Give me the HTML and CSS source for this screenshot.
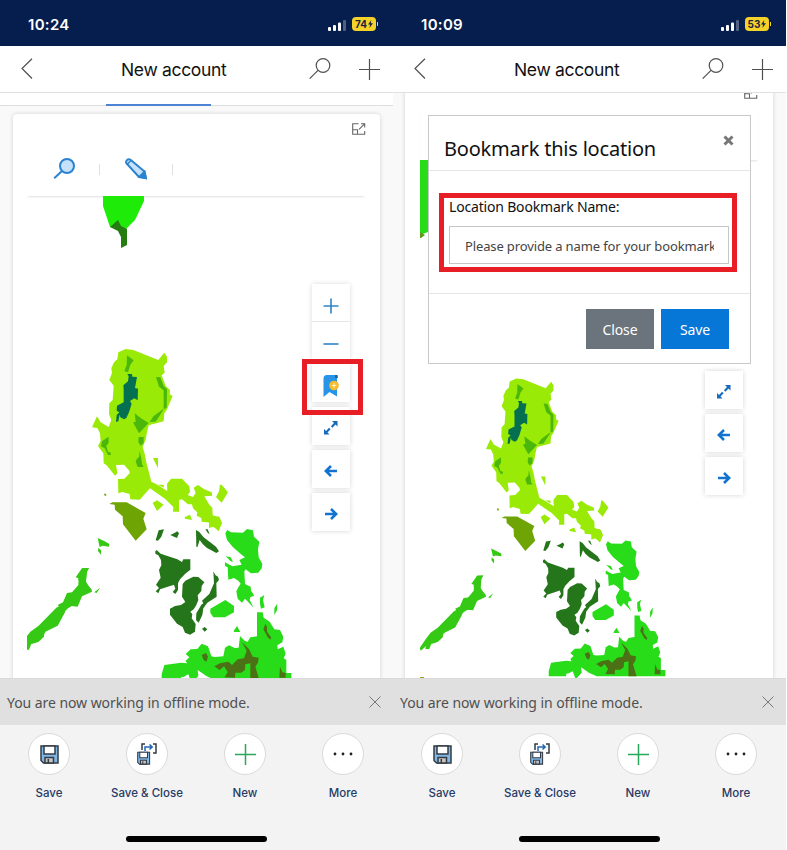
FILE: index.html
```html
<!DOCTYPE html>
<html lang="en">
<head>
<meta charset="utf-8">
<title>New account</title>
<link rel="stylesheet" href="styles.css">
</head>
<body>
<svg class="defs" width="0" height="0" aria-hidden="true">
  <defs>
    <g id="signal"><rect x="0" y="7" width="3" height="4" rx="1"/><rect x="5" y="5" width="3" height="6" rx="1"/><rect x="10" y="2.500" width="3" height="8.500" rx="1"/><rect x="15" y="0" width="3" height="11" rx="1" opacity=".3"/></g>
    <g id="bolt"><path d="M3.300 0 0 4.600h2.100L1.400 8 5 3.200H2.800z"/></g>
    <g id="back"><path d="M11 .7 1 10.500l10 10"/></g>
    <g id="search"><circle cx="14" cy="7.500" r="6.800"/><path d="M9 12.300.7 20.700"/></g>
    <g id="plus"><path d="M10.500 0v21M0 10.500h21"/></g>
    <g id="popout"><path d="M6.500.7H.7v10.600h12V8M.7 6.700h4.800v4.600M9 .7h3.700v3.800M12.500.9 7 6.300"/></g>
    <g id="lens"><circle cx="14" cy="8" r="7" fill="#c5e2fa"/><path d="M9 13 1.200 20.200"/></g>
    <g id="pencil"><path d="M1.500 5.500C.2 3 2.800.3 5.300 1.600L19.500 13.500l1.300 6.500-6.800-1z" fill="#c5e2fa"/><path d="m14.500 18.800 5-5 1.500 6.500z" fill="#2b83cf"/><path d="M2.500 6 6 2.500" stroke-width="1.400"/></g>
    <g id="expand"><path d="M8 0h5.500v5.500L11.500 3.600 8.400 6.700 6.900 5.200 10 2.100zM0 13.500V8l2 1.900 3.100-3.100 1.500 1.500-3.100 3.100 2 2.100z"/></g>
    <g id="arrow"><path d="M13 6H2.500M7 1 1.800 6 7 11"/></g>
    <g id="floppy"><path d="M1 1h17v17H3.500L1 15.500z" fill="#82b7e5"/><path d="M4 1h11v8H4z" fill="#fff"/><path d="M5 18v-5.500h8.500V18z" fill="#c9c3c0"/><path d="M8.300 14v4"/></g>
    <g id="islands">
      <g transform="translate(20 340) scale(.33333)">
        <path fill="#99ea06" d="M295 37 317 27 340 30 415 60 433 38 441 50 441 67 431 78 434 98 425 106 437 138 450 150 449 163 458 168 440 210 433 220 431 244 386 256 381 276 377 299 368 321 374 341 380 371 386 394 394 425 408 432 442 453 441 432 453 416 486 416 508 439 510 456 503 465 519 471 527 459 521 443 534 435 553 448 575 457 577 467 553 469 568 494 577 503 578 526 599 532 605 548 596 573 580 560 576 548 545 545 544 534 530 527 532 517 519 505 516 493 504 493 486 478 477 480 477 515 459 515 460 501 435 476 390 445 359 479 331 478 329 462 307 456 295 460 294 417 313 416 329 400 328 392 312 374 288 375 292 400 285 407 260 376 251 370 250 340 234 318 242 304 240 280 232 264 216 262 231 229 242 247 266 261 274 240 267 222 268 190 278 180 281 137 268 120 276 99 274 85 281 69 285 64 292 58z"/>
        <path fill="#99ea06" d="M399 354h15v31zM413 434h18v9l-10-5zM398 489l13-8 20 13-20 19zM600 434l5 0 19 23-19 31-17-17 9-17zM495 531l15-7 6 16-22-4zM567 540l28-11 11 21-11 24-10-15-18 5z"/>
        <g fill="#4bb70a"><path d="M321 46 341 61 331 74 324 97 313 94 320 75zM408 111 421 112 431 138 441 148 440 204 431 207 431 151 417 140zM344 220 363 235 386 249 357 280 339 247 347 246zM426 210 431 208 413 236 407 245 389 246 400 229zM356 291h15l0 18-9 8-7-10zM246 304l20-14 0 18-7 10 5 18 7 1 2 8h-9l-10-20-11-6zM359 333l5 22 2 18 5 8h-18l-6-17 5-9 5-3z"/></g>
        <path fill="#05704f" d="M322 102h14l1 8 14 1-6 33 9 2-1 35-10-6-13 8 5 8-8 26-8 17-7 4-11-6-2-8-4 20-7 2 2-21 8-8-8-5 1-15 20-10 0-39-1-12 14-12 2-15z"/>
        <path fill="#6ea403" d="m268 492 9-5h43l57 32-7 17 10 32-33 34-38-49-1-24-23-20-1-15zM252 461h6l1 6-5 0z"/>
      </g>
      <g transform="translate(20 490) scale(.33333)">
        <path fill="#35c915" d="m186 235 21-1-7 11-3 30 5 10 13 14 1 6-30 14-13 31-18-2-13 8-6 7-9 13-14 29-34 14-9 18-24 22-23 4-24 22-5-8 19-28 18-24 24-17 54-55 8-4-4-4 16-8 12-28 15-2 8-9 11-13 1-20-9-3z"/>
        <path fill="#35c915" d="M207 234 201 245 198 275 204 285 215 300 185 314 172 347 150 349 138 349 134 355 135 367 113 407 73 427 72 440 55 456 34 461 27 479 14 479 20 450 60 412 73 414 84 396 122 360 118 350 137 345 137 332 160 306 166 311 184 302 186 274 174 270 186 235zM233 144l21 10 13 7v9l-19-3-9 4zM235 173l8 8v13l-9-11zM223 307l17-14-10 16z"/>
        <path fill="#25751a" d="m416 121 16-3-8 22-10 12-7-1zM451 135l11-5 10-6 5 6-6 14-9-4zM528 120l10 6 12 15 38 29 9 14-8 5-29-16-12-11-9-12-7 22-3-2zM556 118l7 0 6 15-6-5z"/>
      </g>
      <g transform="translate(150 520) scale(.33333)" fill="#25751a">
        <path d="M16 94 20 90 32 101 82 118 96 126 100 118 121 118 121 149 105 162 90 178 84 190 84 210 76 222 68 216 76 206 72 194 30 208 25 220 17 214 27 204 18 194 32 173 27 150 34 136 33 120 25 106 16 101zM98 192 106 182 130 170 145 171 163 187 155 198 154 213 143 226 145 240 139 255 131 268 121 275 127 283 125 295 137 312 135 335 120 344 105 338 98 321 81 311 60 284 60 266 75 258 93 255 106 246 96 230zM190 154 196 165 204 170 207 180 199 189 200 230 172 248 160 265 157 285 146 308 138 300 139 280 154 254 160 250 156 242 178 222 192 190z"/><path d="m156 326 8-5 8 7-8 7z"/>
      </g>
      <g transform="translate(215 520) scale(.33333)">
        <path fill="#28dc1a" d="M31 40 37 30 48 37 84 38 96 27 114 31 117 50 133 65 129 88 131 112 142 132 140 145 130 158 108 160 92 148 88 154 90 192 107 200 108 212 115 222 117 228 106 231 104 240 116 263 94 240 90 236 81 248 68 236 64 214 70 202 77 191 70 182 57 174 40 179 38 142 30 138 30 127 52 139 80 134 73 120 90 112 80 104 54 82 36 60zM32 109l15 3 7 13-7-1zM135 233l13-8-4 15 5 22-11 4-3-15zM178 264l9-13-1 20-8 14zM-14 266l45-26 26 18v19l-27 15h-35l-9-13zM56 333l10-15 10 18h-19z"/>
        <path fill="#28dc1a" d="M126 277h17l3 16 18 12 14 23 17 2 10 20-3 17-15 9 1 12 17-8 7 21-6 14 8 4v40h15v21H0l-26-12-26-18 2 18-20 22-10-27-15 8h-6l-1 9h-58l0-17 8-28 50-7 18 2-4-8 11-10-11-10 15-14 20-1 13-16 19 8 10 30 11 2 25-2 5-26 12-7 17 8 12-1 4-35 14 14 9 3 8-13 20-3z"/>
      </g>
      <g transform="translate(20 490) scale(.33333)">
        <path fill="#4c7015" d="m545 495 13-6 6 11-5 15-8-5zM583 529l17-9 25-5 11 10 17-17 19-3 8-23-14-25 21 20 11 23 18 3-2 15-8 12 12 40h-27l0-50-15 3-1 17-12 8-17 0-1 15-31-1 9-16-11-17-13 11zM736 402l5 8 0 15 12 17-1 7-9-7-5-10-8-14zM780 530l7 17 10 2v14h-19z"/>
      </g>
    </g>
  </defs>
</svg>

<div class="screens">
  <section class="phone">
    <div class="status"><span class="time">10:24</span><svg class="signal" width="18" height="11"><use href="#signal"/></svg><span class="battery">74<svg width="5" height="8"><use href="#bolt"/></svg></span></div>
    <header class="bar"><svg class="i-back" width="12" height="22"><use href="#back"/></svg><h1>New account</h1><svg class="i-search" width="22" height="22"><use href="#search"/></svg><svg class="i-plus" width="21" height="21"><use href="#plus"/></svg></header>
    <main class="content">
      <div class="tabs"><div class="tab-active"></div></div>
      <div class="card">
        <div class="popout"><svg width="14" height="12"><use href="#popout"/></svg></div>
        <div class="tools"><svg class="lens" width="23" height="22"><use href="#lens"/></svg><i class="sep"></i><svg class="pencil" width="22" height="22"><use href="#pencil"/></svg><i class="sep"></i></div>
        <div class="map">
          <svg class="map-art" width="338" height="482" viewBox="27 196 338 482">
            <path fill="#1eec08" d="M103 196h41v5l-9 19-9 9-16-2-2-6-5-15z"/><path fill="#257d12" d="m110 227 8-7 3 6 6 3v16l-6 3v-11l-3-6z"/>
            <use href="#islands"/>
          </svg>
          <nav class="controls">
            <div class="zoom"><button><svg width="16" height="16" class="thin"><path d="M8 .5v15M.5 8h15"/></svg></button><button><svg width="16" height="16" class="thin"><path d="M.5 8h15"/></svg></button></div>
            <button class="ctl"><svg width="18" height="22" class="ribbon"><path fill="#2794e7" d="M1.500 4c0-2.500 1-4 3.500-4h10v21.500L7.500 17 1.500 22z"/><path fill="#1c64a8" d="M13 0h2.500l.5 3h-3z"/><circle cx="12" cy="10.500" r="4.800" fill="#f3bc2c"/><path d="M12 8.200v4.600M9.700 10.500h4.600" stroke="#fff0bd" stroke-width="1.200"/></svg></button>
            <button class="ctl"><svg width="14" height="14" class="solid"><use href="#expand"/></svg></button>
            <button class="ctl"><svg width="14" height="12" class="thick"><use href="#arrow"/></svg></button>
            <button class="ctl"><svg width="14" height="12" class="thick flip"><use href="#arrow"/></svg></button>
          </nav>
          <div class="mark mark-bookmark"></div>
        </div>
      </div>
    </main>
    <div class="notice"><span>You are now working in offline mode.</span><svg width="12" height="12"><path d="m.5.5 11 11m0-11-11 11"/></svg></div>
    <footer class="commands">
      <div class="items">
        <div class="item"><span class="round"><svg width="19" height="19" class="disk"><use href="#floppy"/></svg></span><span>Save</span></div>
        <div class="item"><span class="round"><svg width="21" height="22" class="disk"><g transform="translate(0 8.500) scale(.7)"><use href="#floppy"/></g><path d="M8 1H5v6M16 1h3v9h-3"/><path d="M8 8V4h7M12.500 1.500 15.200 4l-2.700 2.500" stroke="#2267b5"/></svg></span><span>Save &amp; Close</span></div>
        <div class="item"><span class="round"><svg width="21" height="21" class="green"><use href="#plus"/></svg></span><span>New</span></div>
        <div class="item"><span class="round"><svg width="20" height="4"><circle cx="2" cy="2" r="1.400"/><circle cx="10" cy="2" r="1.400"/><circle cx="18" cy="2" r="1.400"/></svg></span><span>More</span></div>
      </div>
      <div class="home"></div>
    </footer>
  </section>

  <section class="phone">
    <div class="status"><span class="time">10:09</span><svg class="signal" width="18" height="11"><use href="#signal"/></svg><span class="battery">53<svg width="5" height="8"><use href="#bolt"/></svg></span></div>
    <header class="bar"><svg class="i-back" width="12" height="22"><use href="#back"/></svg><h1>New account</h1><svg class="i-search" width="22" height="22"><use href="#search"/></svg><svg class="i-plus" width="21" height="21"><use href="#plus"/></svg></header>
    <main class="content scrolled">
      <div class="card">
        <div class="popout"><svg width="14" height="12"><use href="#popout"/></svg></div>
        <div class="tools"></div>
        <div class="map">
          <svg class="map-art" width="338" height="518" viewBox="27 160 338 518">
            <path fill="#28dc1a" d="M27 160h20v60l-12 12-8 3z"/><path fill="#5b9a17" d="m27 232 5 3-4 3h-1z"/><path fill="#a4a020" d="M27 677h4v1h-4z"/>
            <g transform="translate(10.200 64.300) scale(.9)"><use href="#islands"/></g>
          </svg>
          <nav class="controls lower">
            <button class="ctl"><svg width="14" height="14" class="solid"><use href="#expand"/></svg></button>
            <button class="ctl"><svg width="14" height="12" class="thick"><use href="#arrow"/></svg></button>
            <button class="ctl"><svg width="14" height="12" class="thick flip"><use href="#arrow"/></svg></button>
          </nav>
        </div>
      </div>
      <div class="dialog">
        <div class="dialog-head"><h2>Bookmark this location</h2><svg width="11" height="11"><path d="m1.500 1.500 8 8m0-8-8 8"/></svg></div>
        <div class="dialog-body"><label>Location Bookmark Name:</label><div class="field"><span>Please provide a name for your bookmark</span></div></div>
        <div class="dialog-foot"><button class="btn grey">Close</button><button class="btn blue">Save</button></div>
        <div class="mark mark-name"></div>
      </div>
    </main>
    <div class="notice"><span>You are now working in offline mode.</span><svg width="12" height="12"><path d="m.5.5 11 11m0-11-11 11"/></svg></div>
    <footer class="commands">
      <div class="items">
        <div class="item"><span class="round"><svg width="19" height="19" class="disk"><use href="#floppy"/></svg></span><span>Save</span></div>
        <div class="item"><span class="round"><svg width="21" height="22" class="disk"><g transform="translate(0 8.500) scale(.7)"><use href="#floppy"/></g><path d="M8 1H5v6M16 1h3v9h-3"/><path d="M8 8V4h7M12.500 1.500 15.200 4l-2.700 2.500" stroke="#2267b5"/></svg></span><span>Save &amp; Close</span></div>
        <div class="item"><span class="round"><svg width="21" height="21" class="green"><use href="#plus"/></svg></span><span>New</span></div>
        <div class="item"><span class="round"><svg width="20" height="4"><circle cx="2" cy="2" r="1.400"/><circle cx="10" cy="2" r="1.400"/><circle cx="18" cy="2" r="1.400"/></svg></span><span>More</span></div>
      </div>
      <div class="home"></div>
    </footer>
  </section>
</div>
</body>
</html>
```
FILE: styles.css
```css
* { box-sizing: border-box; }
body { margin: 0; background: #fff; font-family: Inter, "Liberation Sans", sans-serif; }
svg { display: block; flex: none; }
.defs { position: absolute; }
button { border: 0; padding: 0; font: inherit; }
.screens { display: grid; grid-template-columns: 393px 393px; height: 850px; overflow: hidden; }
.phone { display: grid; grid-template-rows: 46px 47px 585px 47px 125px; min-width: 0; }

.status { background: #051e4d; display: flex; align-items: center; padding: 2px 16px 0 28px; color: #fff; }
.time { flex: 1; font-size: 15px; font-weight: 600; letter-spacing: .3px; }
.signal { fill: #fff; margin: 3px 6px 0 0; }
.battery { position: relative; width: 24px; height: 14px; border-radius: 4px; background: #f5d228; color: #1d2340; font-size: 10px; font-weight: 700; display: flex; align-items: center; justify-content: center; gap: 1px; margin-right: 1px; }
.battery::after { content: ""; position: absolute; right: -2px; top: 5px; width: 1.500px; height: 4px; background: #f5d228; }
.battery svg { fill: #1d2340; }

.bar { background: #fff; border-bottom: 1px solid #e1e1e1; display: flex; align-items: center; padding: 0 13px 0 21px; fill: none; stroke: #505050; stroke-width: 1.200; }
.bar h1 { margin: 0 0 0 88px; width: 188px; font-size: 17.500px; font-weight: 400; letter-spacing: -.330px; color: #111; white-space: nowrap; }
.i-plus { margin-left: 28px; }

.content { position: relative; overflow: hidden; background: #faf9fa; }
.tabs { height: 13px; background: #fff; border-bottom: 1px solid #dedede; padding: 11px 0 0 105.500px; }
.tab-active { width: 105px; height: 2px; background: #4d83d2; }
.card { margin: 8px 13px 0 13px; height: 600px; background: #fff; border-radius: 4px; box-shadow: 0 0 4px rgba(0,0,0,.16); padding: 0 15px 0 14px; }
.scrolled .card { margin: -16px 13px 0 12px; height: 620px; padding: 0 15px; }
.popout { height: 31px; padding: 9px 0 0 324.500px; fill: none; stroke: #666; stroke-width: 1.100; }
.scrolled .popout { height: 32px; padding: 10px 0 0 324px; }
.tools { height: 51px; display: flex; align-items: center; padding: 0 0 3px 26px; fill: none; stroke: #2b83cf; stroke-width: 2; box-shadow: 0 2px 2px -1px rgba(0,0,0,.13); }
.sep { width: 1px; height: 11px; background: #e0e0e0; }
.lens { margin-right: 23px; }
.pencil { margin: 0 25px; }
.map { position: relative; width: 338px; }
.controls { position: absolute; left: 285px; top: 88px; width: 38px; display: flex; flex-direction: column; gap: 5px; }
.controls.lower { top: 211px; }
.zoom { display: flex; flex-direction: column; gap: 1px; background: #e6e6e6; box-shadow: 0 0 5px rgba(0,0,0,.15); }
.controls button { width: 38px; height: 38px; background: #fff; display: grid; place-items: center; }
.zoom button { height: 37px; }
.zoom button + button svg { margin-top: 7px; }
.zoom button:first-child svg { margin-top: 7px; }
.ctl { box-shadow: 0 0 5px rgba(0,0,0,.17); }
.ctl svg { margin-top: 3px; }
.ctl .ribbon { margin-top: 6px; }
.thin { fill: none; stroke: #2f84c6; stroke-width: 1.600; }
.solid { fill: #176bbb; }
.thick { fill: none; stroke: #1173cf; stroke-width: 2.600; }
.flip { transform: scaleX(-1); }
.mark { position: absolute; border: 5px solid #e81e27; }
.mark-bookmark { left: 275px; top: 163px; width: 61px; height: 56px; }

.dialog { position: absolute; left: 35px; top: 22px; width: 323px; height: 249px; background: #fff; border: 1px solid #c8c8c8; font-family: "Noto Sans", sans-serif; display: grid; grid-template-rows: 55px 123px 1fr; }
.dialog-head { border-bottom: 1px solid #e5e5e5; display: flex; justify-content: space-between; padding: 19px 16px 0 15px; }
.dialog h2 { margin: 0; font-size: 20px; line-height: 27px; font-weight: 400; color: #111; letter-spacing: -.200px; white-space: nowrap; }
.dialog-head svg { fill: none; stroke: #777; stroke-width: 3; }
.dialog-body { padding: 26px 20px; border-bottom: 1px solid #e5e5e5; }
.dialog label { display: block; font-size: 14px; line-height: 20px; color: #111; white-space: nowrap; letter-spacing: -.180px; }
.field { margin-top: 9px; width: 280px; height: 38px; border: 1px solid #c6c6c6; padding: 0 14px 0 15px; font-size: 13px; line-height: 38px; color: #444; letter-spacing: -.130px; }
.field span { display: block; overflow: hidden; white-space: nowrap; }
.dialog-foot { display: flex; justify-content: flex-end; gap: 7px; padding: 15px 21px 0; }
.btn { width: 68px; height: 40px; color: #fff; font-size: 14px; letter-spacing: -.100px; }
.grey { background: #6b737c; }
.blue { background: #0676d7; }
.mark-name { left: 10px; top: 77px; width: 298px; height: 79px; }

.notice { background: #e0e0e0; display: flex; align-items: center; justify-content: space-between; padding: 1px 12px 0 7px; font: 14px "Noto Sans", sans-serif; letter-spacing: -.060px; color: #505050; white-space: nowrap; border-top: 1px solid #d9d9d9; z-index: 1; }
.notice svg { stroke: #777; margin-bottom: 2px; }
.commands { background: #f3f3f3; display: flex; flex-direction: column; align-items: center; padding-top: 8px; }
.items { width: 392px; margin-right: 1px; display: grid; grid-template-columns: repeat(4, 98px); }
.item { display: flex; flex-direction: column; align-items: center; gap: 9px; font-size: 11.500px; line-height: 18px; font-weight: 500; color: #273a66; white-space: nowrap; }
.round { width: 42px; height: 42px; border-radius: 50%; background: #fff; border: 1px solid #dadada; display: grid; place-items: center; fill: #222; }
.disk { fill: none; stroke: #333b45; stroke-width: 1.500; }
.green { stroke: #28a85a; stroke-width: 1.500; }
.home { width: 141px; height: 6px; border-radius: 3px; background: #000; margin-top: 34px; }
```
